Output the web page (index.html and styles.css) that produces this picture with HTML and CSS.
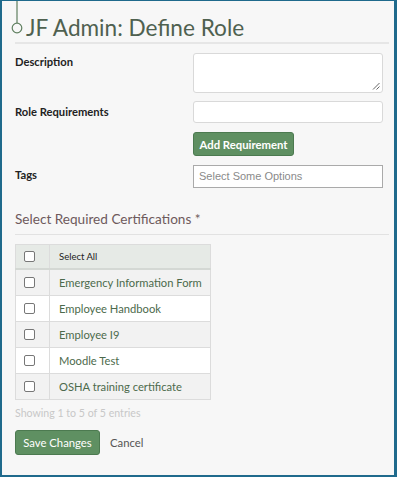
FILE: index.html
```html
<!DOCTYPE html>
<html>
<head>
<meta charset="utf-8">
<link rel="stylesheet" href="styles.css">
</head>
<body>
<div class="frame">
  <div class="header">
    <svg class="marker" width="12" height="34" viewBox="0 0 12 34">
      <line x1="6" y1="0" x2="6" y2="22" stroke="#5f7f5f" stroke-width="1.2"/>
      <circle cx="6" cy="27" r="4.8" fill="none" stroke="#5f7f5f" stroke-width="1.2"/>
    </svg>
    <h1 class="title">JF Admin: Define Role</h1>
  </div>
  <div class="form">
    <div class="row row-desc">
      <label class="label label-desc">Description</label>
      <div class="control"><div class="textarea"><svg class="grip" width="8" height="8" viewBox="0 0 8 8"><line x1="7.5" y1="1" x2="1" y2="7.5" stroke="#555" stroke-width="0.9"/><line x1="7.5" y1="4.5" x2="4.5" y2="7.5" stroke="#555" stroke-width="0.9"/></svg></div></div>
    </div>
    <div class="row">
      <label class="label label-role">Role Requirements</label>
      <div class="control">
        <div class="input"></div>
        <button class="btn btn-add">Add Requirement</button>
      </div>
    </div>
    <div class="row">
      <label class="label label-tags">Tags</label>
      <div class="control"><div class="select">Select Some Options</div></div>
    </div>
  </div>
  <h2 class="section">Select Required Certifications *</h2>
  <table class="table">
    <thead>
      <tr><th class="cb-cell"><span class="cb"></span></th><th class="head-text">Select All</th></tr>
    </thead>
    <tbody>
      <tr class="odd"><td class="cb-cell"><span class="cb"></span></td><td>Emergency Information Form</td></tr>
      <tr><td class="cb-cell"><span class="cb"></span></td><td>Employee Handbook</td></tr>
      <tr class="odd"><td class="cb-cell"><span class="cb"></span></td><td>Employee I9</td></tr>
      <tr><td class="cb-cell"><span class="cb"></span></td><td>Moodle Test</td></tr>
      <tr class="odd"><td class="cb-cell"><span class="cb"></span></td><td>OSHA training certificate</td></tr>
    </tbody>
  </table>
  <div class="info">Showing 1 to 5 of 5 entries</div>
  <div class="actions">
    <button class="btn btn-save">Save Changes</button>
    <span class="cancel">Cancel</span>
  </div>
</div>
</body>
</html>
```
FILE: styles.css
```css
html, body { margin: 0; padding: 0; }
body { font-family: "Lato", "Open Sans", sans-serif; }
.frame {
  box-sizing: border-box;
  width: 397px;
  height: 477px;
  border: 2px solid #1f6a8c;
  border-top-width: 1px;
  border-right-width: 3px;
  background: #f7f7f7;
  padding: 0 5px 0 13px;
  overflow: hidden;
}
.header {
  display: flex;
  align-items: flex-start;
  border-bottom: 2px solid #e6e6e6;
  height: 41px;
}
.marker { flex: none; display: block; margin-left: -4px; }
.title {
  margin: 14px 0 0 3px;
  font-weight: 400;
  font-size: 22.6px;
  line-height: 26px;
  color: #4f6150;
  white-space: nowrap;
}
.form { padding-top: 9px; }
.row { display: flex; margin-bottom: 9px; }
.row-desc { margin-bottom: 8px; }
.label {
  width: 178px;
  flex: none;
  font-weight: 700;
  font-size: 11.2px;
  color: #222;
  line-height: 14px;
}
.label-desc { padding-top: 2px; }
.label-role { padding-top: 4px; }
.label-tags { padding-top: 3px; }
.control { display: flex; flex-direction: column; align-items: flex-start; }
.textarea {
  box-sizing: border-box;
  width: 190px;
  height: 40px;
  background: #fff;
  border: 1px solid #d9d9d9;
  border-radius: 3px;
  position: relative;
}
.grip { position: absolute; right: 2px; bottom: 2px; }
.input {
  box-sizing: border-box;
  width: 190px;
  height: 22px;
  background: #fff;
  border: 1px solid #d9d9d9;
  border-radius: 3px;
}
.btn {
  font-family: inherit;
  font-weight: 700;
  font-size: 11.3px;
  color: #fff;
  background: #5f9062;
  border: 1px solid #4c7a50;
  border-radius: 3px;
  cursor: pointer;
}
.btn-add { margin-top: 9px; height: 24px; width: 101px; padding: 0; }
.select {
  box-sizing: border-box;
  width: 190px;
  height: 23px;
  background: #fff;
  border: 1px solid #aaa;
  font-family: "Liberation Sans", Arial, sans-serif;
  font-size: 11px;
  line-height: 13px;
  color: #8a8a8a;
  padding: 4px 0 0 5px;
}
.section {
  margin: 22px 0 0 0;
  font-weight: 400;
  font-size: 13.6px;
  line-height: 18px;
  color: #6e5a5c;
  padding-bottom: 6px;
  border-bottom: 1px solid #e2e2e2;
}
.table {
  margin: 9px 0 0 0;
  border-collapse: collapse;
  width: 196px;
  font-size: 11.2px;
}
.table th, .table td {
  border: 1px solid #dcdcdc;
  height: 25px;
  padding: 0 0 0 9px;
  text-align: left;
  color: #4c6a4c;
  white-space: nowrap;
}
.table thead th { background: #e6eae6; border-bottom: 2px solid #d4d8d4; height: 23px; }
.head-text { font-size: 9.5px; font-weight: 400; color: #222 !important; }
.table tbody tr { background: #fff; }
.table tbody tr.odd { background: #f2f2f2; }
.cb-cell { width: 25px; padding: 0 0 0 8px !important; }
.cb {
  display: block;
  box-sizing: border-box;
  width: 11px;
  height: 11px;
  border: 1px solid #777;
  border-radius: 2px;
  background: #fff;
}
.info {
  margin: 7px 0 0 0;
  font-size: 10.6px;
  color: #c8c8c8;
}
.actions { display: flex; align-items: center; margin: 11px 0 0 0; }
.btn-save { height: 25px; width: 85px; padding: 0; font-weight: 400; }
.cancel { margin-left: 10px; font-size: 11.3px; color: #555; }
```
